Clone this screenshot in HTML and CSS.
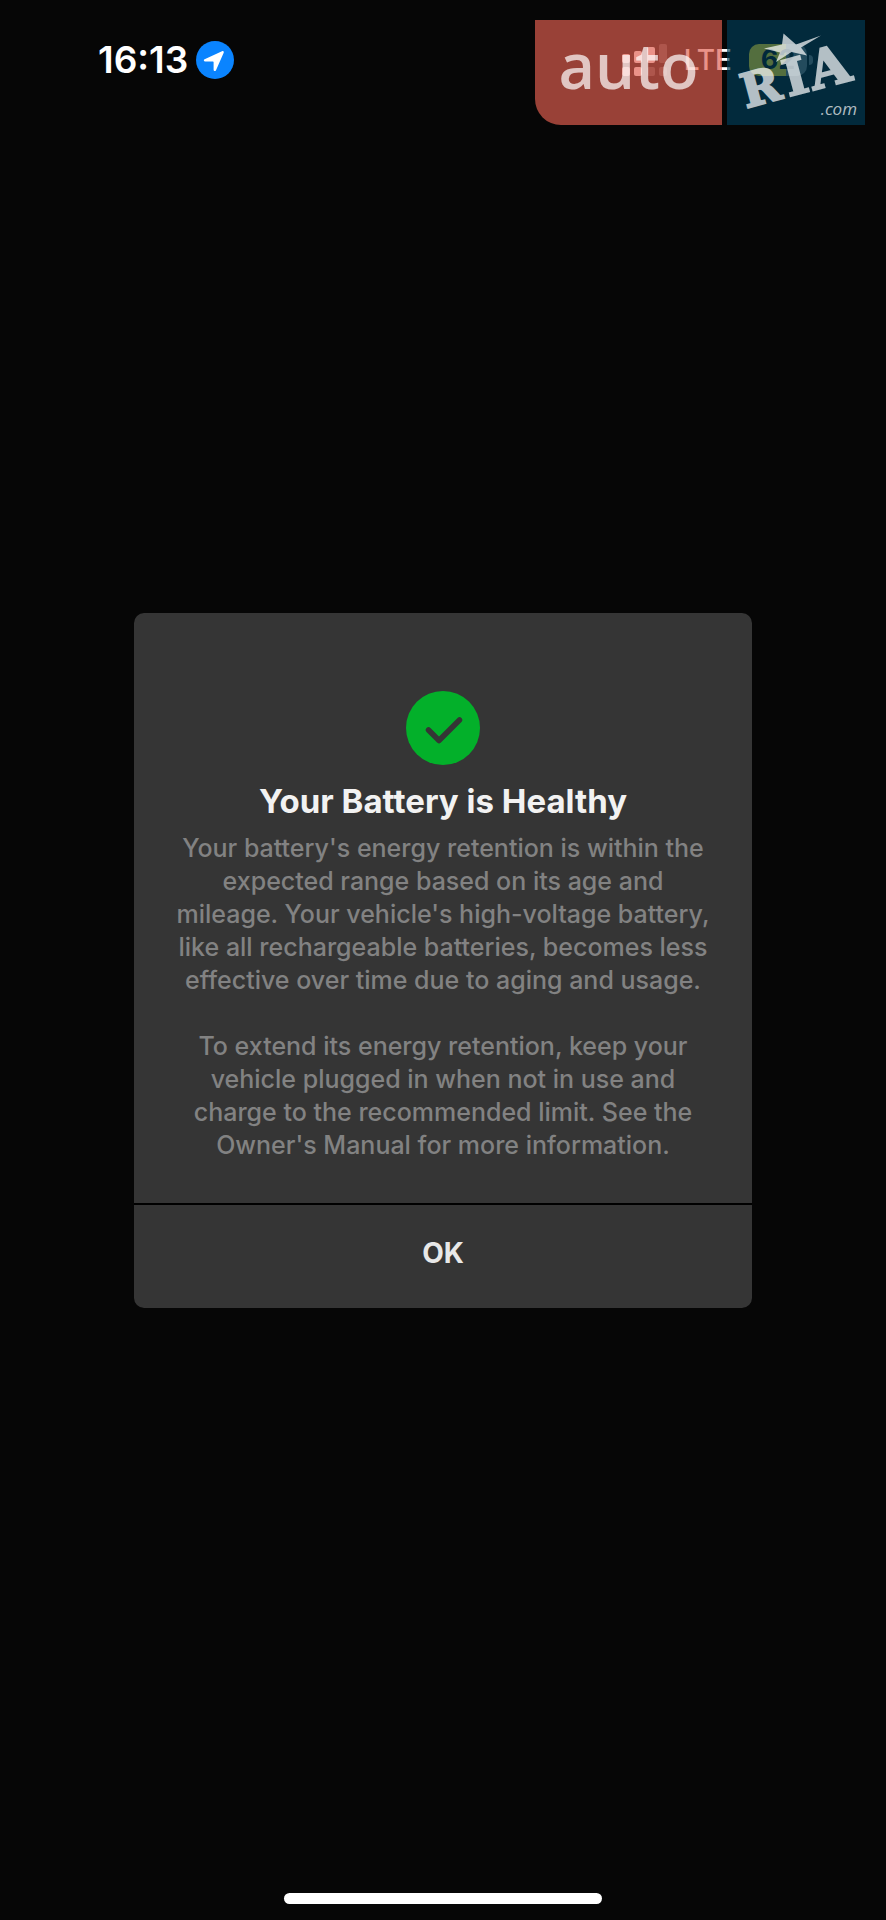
FILE: index.html
```html
<!DOCTYPE html>
<html lang="en">
<head>
<meta charset="utf-8">
<meta name="viewport" content="width=device-width, initial-scale=1">
<title>Battery Health</title>
<link rel="stylesheet" href="styles.css">
</head>
<body>
<div class="screen">
  <header class="status">
    <div class="status-left">
      <time class="clock">16:13</time>
      <svg class="location" viewBox="0 0 38 38" role="img" aria-label="Location in use">
        <circle cx="19" cy="19" r="19" fill="#0a84ff"/>
        <path d="M8.600 18.200 26 10.200c1.300-.6 2.200.3 1.700 1.500L20 29.200c-.7 1.400-2.400 1-2.400-.5v-7.600c0-.5-.2-.7-.7-.7H9.200c-1.500 0-1.900-1.600-.6-2.200z" fill="#fff"/>
      </svg>
    </div>
    <div class="status-right">
      <svg class="signal" viewBox="0 0 45 32" role="img" aria-label="Signal">
        <g fill="#fff">
          <rect x="0" y="10" width="8" height="9" rx="2"/>
          <rect x="12" y="7" width="8" height="12" rx="2"/>
          <rect x="25" y="3" width="8" height="16" rx="2"/>
          <rect x="0" y="23" width="8" height="9" rx="2"/>
          <rect x="12" y="23" width="8" height="9" rx="2"/>
        </g>
        <g fill="#fff" opacity=".25">
          <rect x="37" y="0" width="8" height="19" rx="2"/>
          <rect x="25" y="23" width="8" height="9" rx="2"/>
          <rect x="37" y="23" width="8" height="9" rx="2"/>
        </g>
      </svg>
      <span class="network">LTE</span>
      <span class="battery"><span class="battery-level">62</span></span>
    </div>
    <div class="brand">
      <span class="brand-auto">auto</span>
      <span class="brand-ria">
        <svg class="brand-art" viewBox="0 0 138 105" role="img" aria-label="RIA">
          <path d="M56.500 13.500 69 24.500 94 15.500 74 27.500 80 35.500 64.500 32 49 42 53 32.500 37 28.500 55 24.500z"/>
          <g class="brand-letters" transform="translate(20 88) rotate(-15)">
            <text x="-1" y="0" font-size="47">R</text>
            <text x="43" y="0" font-size="50">I</text>
            <text x="69" y="0" font-size="53">A</text>
          </g>
        </svg>
        <span class="brand-com">.com</span>
      </span>
    </div>
  </header>

  <main class="stage">
    <section class="dialog" role="dialog" aria-labelledby="dialog-title">
      <div class="dialog-body">
        <svg class="check" viewBox="0 0 74 74" aria-hidden="true">
          <circle cx="37" cy="37" r="37" fill="#03b02a"/>
          <path d="M22.500 39 33 49.500 53.500 29" fill="none" stroke="#353535" stroke-width="5.500" stroke-linecap="round" stroke-linejoin="round"/>
        </svg>
        <h1 class="title" id="dialog-title">Your Battery is Healthy</h1>
        <p class="text">Your battery's energy retention is within the expected range based on its age and mileage. Your vehicle's high-voltage battery, like all rechargeable batteries, becomes less effective over time due to aging and usage.</p>
        <p class="text">To extend its energy retention, keep your vehicle plugged in when not in use and charge to the recommended limit. See the Owner's Manual for more information.</p>
      </div>
      <button class="ok" type="button">OK</button>
    </section>
  </main>

  <footer class="home"><span class="home-bar"></span></footer>
</div>
</body>
</html>
```

FILE: styles.css
```css
* {
  box-sizing: border-box;
}

body {
  margin: 0;
  background: #060606;
  color: #fff;
  font-family: Inter, Roboto, sans-serif;
}

.screen {
  position: relative;
  display: grid;
  grid-template-rows: 1fr auto 1fr;
  min-height: 100vh;
}

.status {
  display: flex;
  justify-content: space-between;
  align-items: flex-start;
  padding: 40px 72px 0 98px;
}

.status-left,
.status-right {
  display: flex;
  align-items: center;
  height: 40px;
}

.status-left {
  gap: 8px;
}

.clock {
  font-size: 37px;
  font-weight: 600;
  line-height: 40px;
}

.location {
  width: 38px;
  height: 38px;
}

.status-right {
  gap: 17px;
}

.signal {
  width: 45px;
  height: 32px;
}

.network {
  font-size: 28px;
  font-weight: 500;
  line-height: 40px;
}

.battery {
  position: relative;
  width: 58px;
  height: 32px;
  margin-right: 7px;
  border-radius: 10px;
  background: linear-gradient(90deg, #ffd60a 64%, #6b6b6b 64%);
  color: #000;
  text-align: center;
}

.battery::after {
  content: "";
  position: absolute;
  top: 11px;
  right: -6px;
  width: 4px;
  height: 10px;
  border-radius: 0 4px 4px 0;
  background: #6b6b6b;
}

.battery-level {
  font-size: 27px;
  font-weight: 700;
  line-height: 32px;
}

.brand {
  position: absolute;
  top: 20px;
  right: 21px;
  display: flex;
  gap: 5px;
  height: 105px;
  font-family: "Open Sans", "Noto Sans", sans-serif;
  color: rgba(255, 255, 255, 0.7);
}

.brand-auto {
  width: 187px;
  border-radius: 0 0 0 26px;
  background: rgba(224, 94, 79, 0.68);
  font-size: 63px;
  font-weight: 600;
  line-height: 90px;
  text-align: center;
}

.brand-ria {
  position: relative;
  width: 138px;
  background: rgba(2, 60, 87, 0.68);
}

.brand-art {
  display: block;
  width: 138px;
  height: 105px;
  fill: #fff;
  opacity: 0.7;
}

.brand-letters {
  font-family: "DejaVu Serif", serif;
  font-weight: 700;
  stroke: #fff;
  stroke-width: 2px;
}

.brand-com {
  position: absolute;
  right: 8px;
  bottom: 4px;
  font-size: 17px;
  font-style: italic;
  line-height: 24px;
}

.stage {
  padding: 0 134px;
}

.dialog {
  overflow: hidden;
  border-radius: 10px;
  background: #000;
}

.dialog-body {
  display: flex;
  flex-direction: column;
  align-items: center;
  padding: 78px 36px 41px;
  background: #353535;
  text-align: center;
}

.check {
  width: 74px;
  height: 74px;
}

.title {
  margin: 16px 0 11px;
  color: #f2f2f2;
  font-size: 33px;
  font-weight: 700;
  line-height: 40px;
}

.text {
  margin: 0;
  color: #828282;
  font-size: 25px;
  font-weight: 500;
  line-height: 33px;
}

.text + .text {
  margin-top: 33px;
}

.ok {
  display: block;
  width: 100%;
  height: 103px;
  margin-top: 2px;
  padding: 0 0 6px;
  border: 0;
  background: #353535;
  color: #e8e8e8;
  font: 700 28px/40px Inter, Roboto, sans-serif;
}

.home {
  display: flex;
  justify-content: center;
  align-items: flex-end;
  padding-bottom: 16px;
}

.home-bar {
  width: 36%;
  height: 11px;
  border-radius: 6px;
  background: #fff;
}
```
